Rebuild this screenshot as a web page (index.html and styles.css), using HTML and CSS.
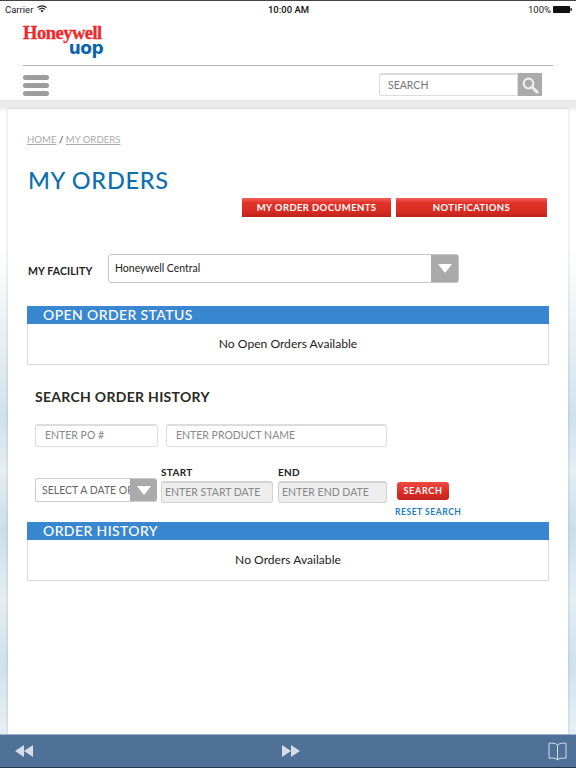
FILE: index.html
```html
<!DOCTYPE html>
<html lang="en">
<head>
<meta charset="UTF-8">
<title>My Orders</title>
<link rel="stylesheet" href="styles.css">
</head>
<body>
<div class="status">
  <div class="carrier">Carrier
    <svg class="wifi" width="10" height="8" viewBox="0 0 10 8"><path d="M5 7.6 3.4 5.8a2.3 2.3 0 0 1 3.2 0zM2.5 4.9l-.8-.9a4.8 4.8 0 0 1 6.6 0l-.8.9a3.6 3.6 0 0 0-5 0zM.9 3.1 0 2.2a7.3 7.3 0 0 1 10 0l-.9.9a6 6 0 0 0-8.2 0z" fill="#222"/></svg>
  </div>
  <div class="clock">10:00 AM</div>
  <div class="battery">100%
    <svg width="19" height="7" viewBox="0 0 19 7"><rect width="17" height="7" rx="1" fill="#111"/><rect x="17.4" y="2.2" width="1.4" height="2.6" fill="#111"/></svg>
  </div>
</div>

<header class="top">
  <div class="logo">
    <div class="logo-name">Honeywell</div>
    <div class="logo-sub">uop</div>
  </div>
  <div class="top-rule"></div>
  <div class="top-row">
    <div class="burger"><span></span><span></span><span></span></div>
    <div class="site-search">
      <div class="site-search-box">SEARCH</div>
      <div class="site-search-btn">
        <svg width="18" height="18" viewBox="0 0 18 18"><circle cx="7.5" cy="7.5" r="4.8" fill="none" stroke="#eee" stroke-width="2.2"/><path d="M11 11l5 5" stroke="#eee" stroke-width="3" stroke-linecap="round"/></svg>
      </div>
    </div>
  </div>
</header>

<main class="stage">
  <div class="card">
    <div class="crumbs"><a>HOME</a> / <a>MY ORDERS</a></div>
    <h1 class="title">MY ORDERS</h1>
    <div class="actions">
      <div class="red-btn docs">MY ORDER DOCUMENTS</div>
      <div class="red-btn notes">NOTIFICATIONS</div>
    </div>

    <div class="facility">
      <div class="facility-label">MY FACILITY</div>
      <div class="facility-select">
        <div class="facility-value">Honeywell Central</div>
        <div class="arrow-box"><span class="arrow"></span></div>
      </div>
    </div>

    <section class="panel open-panel">
      <div class="panel-head">OPEN ORDER STATUS</div>
      <div class="panel-body">No Open Orders Available</div>
    </section>

    <h2 class="history-title">SEARCH ORDER HISTORY</h2>

    <div class="po-row">
      <div class="field po">ENTER PO #</div>
      <div class="field product">ENTER PRODUCT NAME</div>
    </div>

    <div class="date-row">
      <div class="date-select">
        <div class="date-select-text">SELECT A DATE OPTION</div>
        <div class="arrow-box small"><span class="arrow"></span></div>
      </div>
      <div class="date-col start">
        <div class="date-label">START</div>
        <div class="date-field">ENTER START DATE</div>
      </div>
      <div class="date-col end">
        <div class="date-label">END</div>
        <div class="date-field">ENTER END DATE</div>
      </div>
      <div class="search-col">
        <div class="search-btn">SEARCH</div>
        <a class="reset">RESET SEARCH</a>
      </div>
    </div>

    <section class="panel">
      <div class="panel-head">ORDER HISTORY</div>
      <div class="panel-body">No Orders Available</div>
    </section>
  </div>
</main>

<footer class="toolbar">
  <svg width="18" height="12" viewBox="0 0 18 12"><path d="M9 0v12L0 6zM18 0v12L9 6z" fill="#d5dde8"/></svg>
  <svg width="18" height="12" viewBox="0 0 18 12"><path d="M0 0v12l9-6zM9 0v12l9-6z" fill="#d5dde8"/></svg>
  <svg width="19" height="19" viewBox="0 0 19 19"><path d="M9.5 3C8 1.300 4 .8 1 1.300V16.200c3-.5 7 0 8.500 1.600 1.500-1.600 5.500-2.100 8.500-1.600V1.300C15 .8 11 1.300 9.500 3zM9.500 3v14.800" fill="none" stroke="#d5dde8" stroke-width="1"/></svg>
</footer>
</body>
</html>
```
FILE: styles.css
```css
* { box-sizing: border-box; }
html, body { margin: 0; padding: 0; }
body {
  width: 576px;
  height: 768px;
  overflow: hidden;
  display: flex;
  flex-direction: column;
  background: #fff;
  font-family: "Lato", "Liberation Sans", sans-serif;
  color: #222;
}

/* status bar */
.status {
  height: 16px;
  flex: none;
  display: flex;
  align-items: center;
  justify-content: space-between;
  padding: 1px 4px 0 5px;
  border-top: 1px solid #444;
  font-family: "Roboto", "Liberation Sans", sans-serif;
  font-size: 9.5px;
  color: #222;
}
.carrier { width: 120px; display: flex; align-items: center; gap: 4px; }
.clock { font-weight: 500; color: #111; }
.battery { width: 120px; display: flex; align-items: center; justify-content: flex-end; gap: 2px; }

/* header */
.top { flex: none; height: 84px; padding: 0 23px; }
.logo { width: 80px; height: 49px; padding-top: 9px; }
.logo-name {
  font-family: "Liberation Serif", serif;
  font-weight: bold;
  font-size: 18.5px;
  line-height: 16px;
  letter-spacing: -0.5px;
  white-space: nowrap;
  color: #ed2a2b;
  -webkit-text-stroke: 0.35px #ed2a2b;
}
.logo-sub {
  font-family: "DejaVu Sans", sans-serif;
  font-weight: bold;
  font-size: 17px;
  line-height: 14px;
  letter-spacing: -0.6px;
  text-align: right;
  color: #0b63ad;
}
.top-rule { width: 530px; height: 1px; background: #b5b5b5; }
.top-row { display: flex; justify-content: space-between; padding: 7px 11px 0 0; }
.burger { width: 26px; display: flex; flex-direction: column; gap: 3.3px; padding-top: 2px; }
.burger span { display: block; height: 4.7px; border-radius: 3px; background: #9c9c9c; }
.site-search { display: flex; width: 163px; height: 23px; }
.site-search-box {
  flex: 1;
  padding: 1px 0 0 8px;
  border: 1px solid #dcdcdc;
  border-top-width: 2px;
  border-radius: 3px 0 0 3px;
  font-size: 10.5px;
  line-height: 18px;
  color: #777;
}
.site-search-btn {
  width: 24px;
  display: flex;
  align-items: center;
  justify-content: center;
  background: #aaa;
}

/* page behind the card */
.stage {
  flex: 1;
  min-height: 0;
  padding: 9px 8px 0;
  background:
    linear-gradient(#e8e8e8, #ececec 7px, rgba(236,236,236,0) 12px),
    linear-gradient(#fff 150px, #e6eff5 240px, #cfe1ec 320px, #e4eef5 370px, #cadeea 430px, #e3eef5 500px, #cfe1ec 560px, #e6f0f6 635px);
}
.card {
  height: 100%;
  padding: 0 19px;
  background: #fff;
  box-shadow: 0 0 3px rgba(0,0,0,0.18);
  overflow: hidden;
}
.crumbs { padding-top: 24px; font-size: 9.6px; line-height: 13px; color: #333; }
.crumbs a { color: #aaa; text-decoration: underline; }
.title {
  margin: 19px 0 0 1px;
  font-size: 23.5px;
  line-height: 30px;
  font-weight: 500;
  letter-spacing: 0.7px;
  color: #0f70ae;
}

/* red buttons */
.actions { display: flex; justify-content: flex-end; gap: 5px; height: 20px; margin-top: 3px; margin-right: 2px; }
.red-btn {
  height: 19px;
  display: flex;
  align-items: center;
  justify-content: center;
  background: linear-gradient(#f2605a, #e2332b 25%, #d92b22 70%, #b9241c);
  color: #fff;
  font-size: 9.5px;
  font-weight: 700;
  letter-spacing: 0.38px;
}
.docs { width: 149px; }
.notes { width: 151px; }

/* facility */
.facility { display: flex; align-items: center; margin-top: 36px; margin-left: 1px; }
.facility-label { width: 80px; padding-top: 5px; font-size: 10.5px; font-weight: 700; letter-spacing: 0.13px; color: #222; }
.facility-select {
  width: 351px;
  height: 29px;
  display: flex;
  justify-content: space-between;
  border: 1px solid #c6c6c6;
  border-radius: 3px;
}
.facility-value { padding: 6px 0 0 6px; font-size: 10.5px; line-height: 15px; color: #222; }
.arrow-box { width: 27px; display: flex; align-items: center; justify-content: center; background: #aaa; }
.arrow-box.small { width: 27px; flex: none; }
.arrow { width: 0; height: 0; border-style: solid; border-width: 9px 7px 0; border-color: #fff transparent transparent; }

/* panels */
.panel { width: 522px; height: 59px; border: 1px solid #dcdcdc; border-top: 0; }
.open-panel { margin-top: 23px; }
.panel-head {
  height: 18px;
  margin: 0 -1px;
  padding-left: 16px;
  background: #3a87d1;
  color: #fff;
  font-size: 14px;
  line-height: 18px;
  font-weight: 500;
  letter-spacing: 0.4px;
}
.panel-body { padding-top: 11px; text-align: center; font-size: 12.1px; line-height: 18px; color: #222; }

/* order history search */
.history-title {
  margin: 22px 0 0 8px;
  font-size: 14px;
  line-height: 19px;
  font-weight: 700;
  letter-spacing: 0.3px;
  color: #2a2a1e;
}
.po-row { display: flex; gap: 8px; margin: 18px 0 0 8px; }
.field {
  height: 23px;
  padding-left: 9px;
  border: 1px solid #ddd;
  border-top-width: 2px;
  border-radius: 3px;
  font-size: 10.5px;
  line-height: 19px;
  color: #888;
}
.po { width: 123px; }
.product { width: 221px; }
.date-row { display: flex; height: 56px; margin: 19px 0 0 8px; }
.date-select {
  width: 122px;
  height: 24px;
  margin-top: 12px;
  display: flex;
  border: 1px solid #ccc;
  border-right: 0;
  border-radius: 3px;
  overflow: hidden;
}
.date-select-text {
  flex: 1;
  padding-left: 6px;
  overflow: hidden;
  white-space: nowrap;
  font-size: 10.5px;
  line-height: 22px;
  color: #666;
}
.date-col { flex: none; }
.date-col.start { width: 117px; margin-left: 4px; }
.date-col.end { width: 109px; }
.date-label { font-size: 10px; line-height: 12px; font-weight: 700; letter-spacing: 0.3px; color: #222; }
.date-field {
  height: 22px;
  margin-top: 3px;
  padding-left: 3px;
  border: 1px solid #d2d2d2;
  border-top-width: 2px;
  border-radius: 3px;
  background: #eee;
  font-size: 10.5px;
  line-height: 19px;
  white-space: nowrap;
  overflow: hidden;
  color: #888;
}
.date-col.start .date-field { width: 112px; }
.search-col { width: 80px; margin-left: 8px; padding-top: 16px; }
.search-btn {
  width: 52px;
  height: 18px;
  margin-left: 2px;
  border-radius: 3px;
  background: linear-gradient(#ee4a42, #dc2b22 60%, #c3261e);
  color: #fff;
  text-align: center;
  font-size: 9px;
  line-height: 18px;
  font-weight: 700;
  letter-spacing: 0.7px;
}
.reset {
  display: block;
  margin-top: 6px;
  white-space: nowrap;
  font-size: 8.5px;
  line-height: 12px;
  font-weight: 700;
  letter-spacing: 0.55px;
  color: #1a7dbd;
}

/* bottom toolbar */
.toolbar {
  flex: none;
  height: 34px;
  display: flex;
  align-items: center;
  justify-content: space-between;
  padding: 0 9px 0 15px;
  background: #4f7097;
  border-top: 1px solid #9db1c8;
  border-bottom: 1px solid #1f3a55;
}
```
